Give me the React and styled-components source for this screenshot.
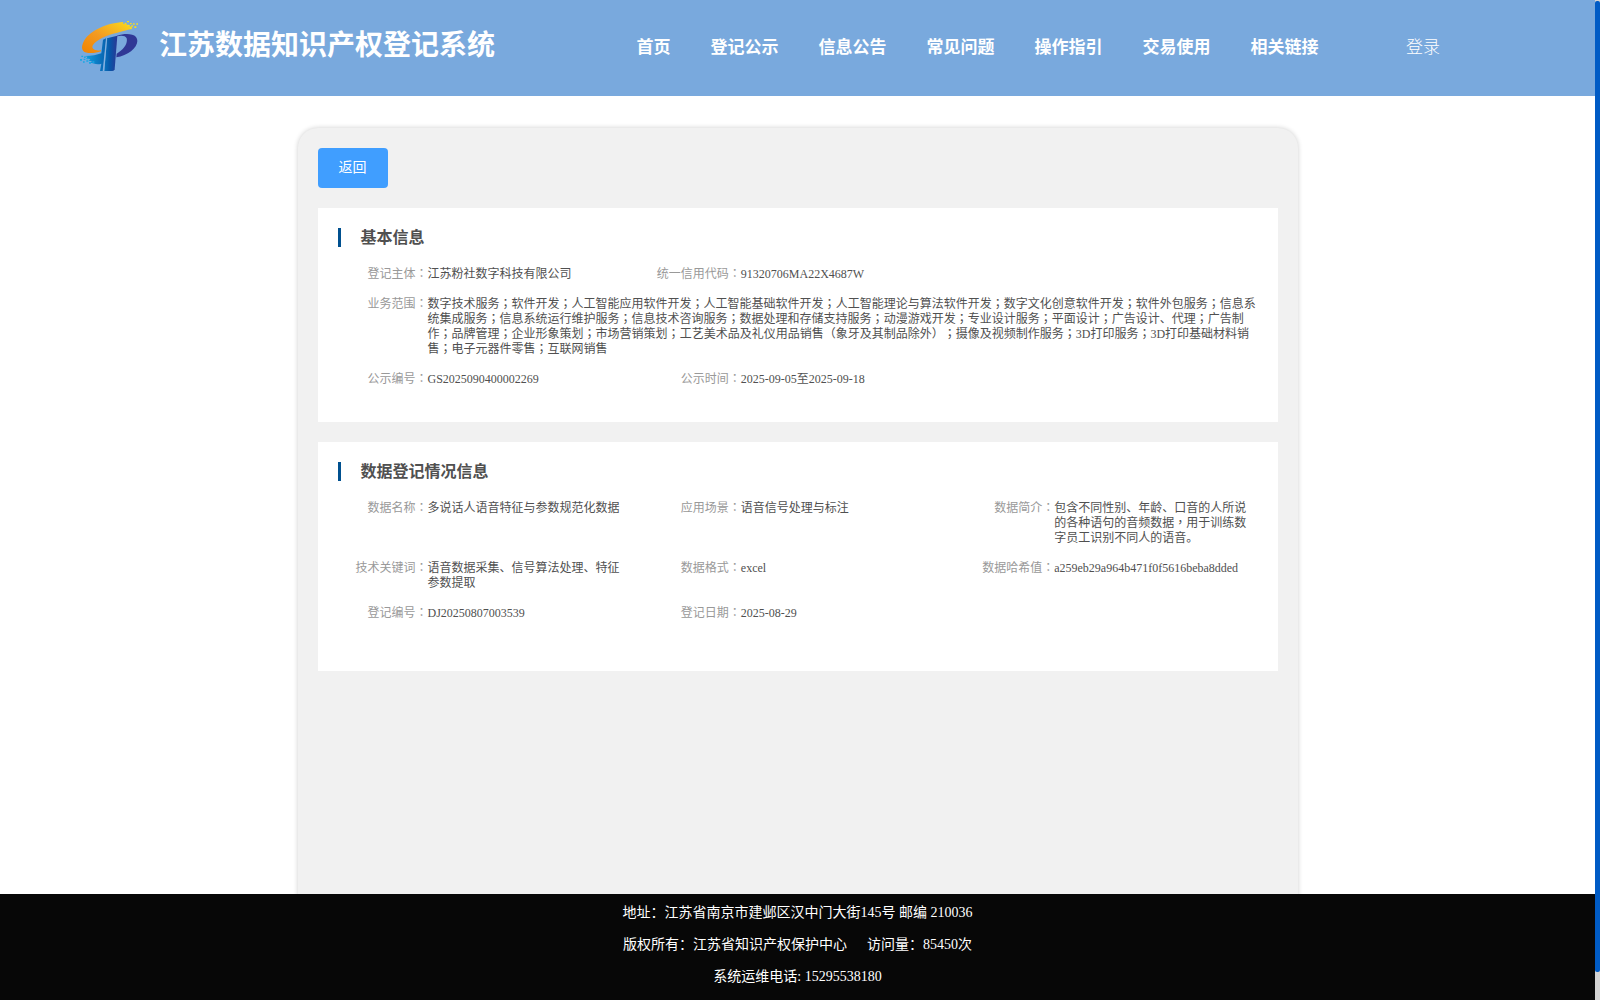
import React from 'react';
import styled, { createGlobalStyle } from 'styled-components';

const GlobalStyle = createGlobalStyle`
	* {
		box-sizing: border-box;
	}

	body {
		margin: 0;
		background-color: #fff;
		font-family: "Liberation Serif", "Noto Sans CJK SC", serif;
		text-spacing-trim: space-all;
		overflow: hidden;
	}
`;

const Screen = styled.div`
	display: flex;
	height: 1000px;
`;

const Page = styled.div`
	flex: 1;
	display: flex;
	flex-direction: column;
	min-width: 0;
`;

const Header = styled.header`
	display: flex;
	align-items: center;
	flex: none;
	height: 96px;
	padding: 0 155px 0 79px;
	background-color: #79a9dd;
	color: #fff;
`;

const SystemName = styled.h1`
	width: 340px;
	margin: -4px 0 0 20px;
	font-size: 28px;
	line-height: 36px;
	font-weight: 700;
	white-space: nowrap;
`;

const Nav = styled.nav`
	display: flex;
	gap: 40px;
	margin: -1px 0 0 137.5px;
`;

const NavLink = styled.a`
	font-size: 17px;
	line-height: 24px;
	font-weight: 700;
	white-space: nowrap;
`;

const Login = styled.a`
	margin: -1px 0 0 auto;
	font-size: 17px;
	line-height: 24px;
	font-weight: 300;
	white-space: nowrap;
`;

const Main = styled.main`
	flex: 1;
	min-height: 0;
	padding-top: 32px;
	overflow: hidden;
`;

const Panel = styled.div`
	width: 1000px;
	height: 900px;
	margin: 0 auto;
	padding: 20px;
	border-radius: 20px;
	background-color: #f1f1f1;
	box-shadow: 0 0 5px rgba(0,0,0,0.2);
`;

const BackButton = styled.button`
	display: block;
	width: 70px;
	height: 40px;
	padding: 0;
	border: 0;
	border-radius: 4px;
	background-color: #409eff;
	color: #fff;
	font-family: inherit;
	font-size: 14px;
	line-height: 40px;
`;

const Card = styled.section`
	height: ${props => props.$height}px;
	margin-top: 20px;
	padding-top: 20px;
	background-color: #fff;
`;

const CardTitle = styled.h2`
	height: 19px;
	margin: 0 0 20px 20px;
	padding-left: 20px;
	border-left: 3px solid #00508f;
	color: #505050;
	font-size: 16px;
	line-height: 20px;
	font-weight: 700;
`;

const Fields = styled.dl`
	display: grid;
	grid-template-columns: repeat(3, 1fr);
	row-gap: 15px;
	margin: 0 0 0 20px;
	font-size: 12px;
	line-height: 15px;
`;

const Field = styled.div`
	display: flex;
	grid-column: ${props => props.$start || 'auto'} / span ${props => props.$span || 1};
	padding-right: 20px;
`;

const Label = styled.dt`
	flex: none;
	width: 90px;
	color: #999;
	text-align: right;
	white-space: nowrap;
`;

const Value = styled.dd`
	flex: 1;
	min-width: 0;
	margin: 0;
	color: #505050;
`;

const Mark = styled.span`
	font-family: "Liberation Serif", "Noto Sans CJK TC", serif;
`;

const Footer = styled.footer`
	flex: none;
	height: 106px;
	padding-top: 3px;
	background-color: #070707;
	color: #fff;
	font-size: 14px;
	text-align: center;
`;

const FooterLine = styled.p`
	margin: 0;
	line-height: 32px;
	white-space: pre;
`;

const Visits = styled.span`
	margin-left: 20px;
`;

const ScrollTrack = styled.div`
	flex: none;
	width: 5px;
	padding-top: 1px;
	background-color: #d3d3d3;
`;

const ScrollThumb = styled.div`
	height: 971px;
	border-radius: 2px;
	background-color: #005bc5;
`;

const navItems = ['首页', '登记公示', '信息公告', '常见问题', '操作指引', '交易使用', '相关链接'];

const basicInfo = [
	{ label: '登记主体', value: '江苏粉社数字科技有限公司' },
	{ label: '统一信用代码', value: '91320706MA22X4687W' },
	{
		label: '业务范围',
		value: '数字技术服务；软件开发；人工智能应用软件开发；人工智能基础软件开发；人工智能理论与算法软件开发；数字文化创意软件开发；软件外包服务；信息系统集成服务；信息系统运行维护服务；信息技术咨询服务；数据处理和存储支持服务；动漫游戏开发；专业设计服务；平面设计；广告设计、代理；广告制作；品牌管理；企业形象策划；市场营销策划；工艺美术品及礼仪用品销售（象牙及其制品除外）；摄像及视频制作服务；3D打印服务；3D打印基础材料销售；电子元器件零售；互联网销售',
		start: 1,
		span: 3,
	},
	{ label: '公示编号', value: 'GS2025090400002269' },
	{ label: '公示时间', value: '2025-09-05至2025-09-18' },
];

const dataInfo = [
	{ label: '数据名称', value: '多说话人语音特征与参数规范化数据' },
	{ label: '应用场景', value: '语音信号处理与标注' },
	{ label: '数据简介', value: '包含不同性别、年龄、口音的人所说的各种语句的音频数据，用于训练数字员工识别不同人的语音。' },
	{ label: '技术关键词', value: '语音数据采集、信号算法处理、特征参数提取' },
	{ label: '数据格式', value: 'excel' },
	{ label: '数据哈希值', value: 'a259eb29a964b471f0f5616beba8dded' },
	{ label: '登记编号', value: 'DJ20250807003539' },
	{ label: '登记日期', value: '2025-08-29' },
];

// these marks sit in the middle of their cell
const withMarks = text => text.split(/([；，（）])/).map((part, index) => (
	index % 2 ? <Mark key={index}>{part}</Mark> : part
));

const LogoSvg = styled.svg`
	flex: none;
	margin-top: -5px;
`;

const Logo = () => (
	<LogoSvg width="60" height="52" viewBox="27 27 180 156">
		<defs>
			<linearGradient id="swoosh" x1="0" y1="1" x2="1" y2="0">
				<stop offset="0" stopColor="#f08300" />
				<stop offset="0.45" stopColor="#f39a22" />
				<stop offset="1" stopColor="#fbdc1c" />
			</linearGradient>
			<linearGradient id="stem" x1="0" y1="0" x2="1" y2="0">
				<stop offset="0" stopColor="#0872bd" />
				<stop offset="0.45" stopColor="#0855a7" />
				<stop offset="1" stopColor="#2b3795" />
			</linearGradient>
			<linearGradient id="tail" x1="0" y1="0" x2="1" y2="0">
				<stop offset="0" stopColor="#12a5e4" />
				<stop offset="1" stopColor="#0862b0" />
			</linearGradient>
		</defs>
		<path d="M160 33C112 36 62 57 43 88C30 111 36 125 55 126C69 127 82 125 93 121V118C72 120 63 112 69 102C78 87 108 73 142 65C160 60 174 56 187 54L184 51L188 47L178 46L180 42L170 42L171 38L159 38Z" fill="url(#swoosh)" />
		<path d="M171 30h6v4h-6zM164 35h5v4h-5zM180 36h5v4h-5zM189 37h5v4h-5zM172 41h6v4h-6zM184 43h5v4h-5zM199 37h5v4h-5zM193 46h6v5h-6zM179 49h6v4h-6z" fill="#f5dc22" />
		<path d="M141 74C163 67 188 67 198 78C214 100 180 134 139 139L140 128C160 116 174 98 170 82C167 74 154 73 141 76Z" fill="#303895" />
		<path d="M111 82Q126 77 142 74L134 175Q133 180 127 180H103Z" fill="url(#stem)" />
		<path d="M99 86L108 82L98 180H90L94 158C82 162 70 158 60 154L67 151L56 149L61 144L49 143L52 137L38 135C61 136 80 132 94 127Z" fill="url(#tail)" />
		<path d="M110 84L101 180" stroke="#8cb6e3" strokeWidth="2" />
		<path d="M34 134h5v4h-5zM42 137h5v4h-5zM30 144h6v5h-6zM41 143h5v4h-5zM50 141h6v4h-6zM39 151h5v4h-5zM49 148h6v4h-6zM57 153h6v5h-6zM67 151h6v4h-6z" fill="#18a8e5" />
	</LogoSvg>
);

const InfoCard = ({ title, items, height }) => (
	<Card $height={height}>
		<CardTitle>{title}</CardTitle>
		<Fields>
			{items.map(item => (
				<Field key={item.label} $start={item.start} $span={item.span}>
					<Label>{item.label}<Mark>：</Mark></Label>
					<Value>{withMarks(item.value)}</Value>
				</Field>
			))}
		</Fields>
	</Card>
);

const App = () => (
	<>
		<GlobalStyle />
		<Screen>
			<Page>
				<Header>
					<Logo />
					<SystemName>江苏数据知识产权登记系统</SystemName>
					<Nav>
						{navItems.map(item => <NavLink key={item}>{item}</NavLink>)}
					</Nav>
					<Login>登录</Login>
				</Header>
				<Main>
					<Panel>
						<BackButton>返回</BackButton>
						<InfoCard title="基本信息" items={basicInfo} height={214} />
						<InfoCard title="数据登记情况信息" items={dataInfo} height={229} />
					</Panel>
				</Main>
				<Footer>
					<FooterLine>地址：江苏省南京市建邺区汉中门大街145号 邮编 210036</FooterLine>
					<FooterLine>版权所有：江苏省知识产权保护中心<Visits>访问量：85450次</Visits></FooterLine>
					<FooterLine>系统运维电话: 15295538180</FooterLine>
				</Footer>
			</Page>
			<ScrollTrack>
				<ScrollThumb />
			</ScrollTrack>
		</Screen>
	</>
);

export default App;
